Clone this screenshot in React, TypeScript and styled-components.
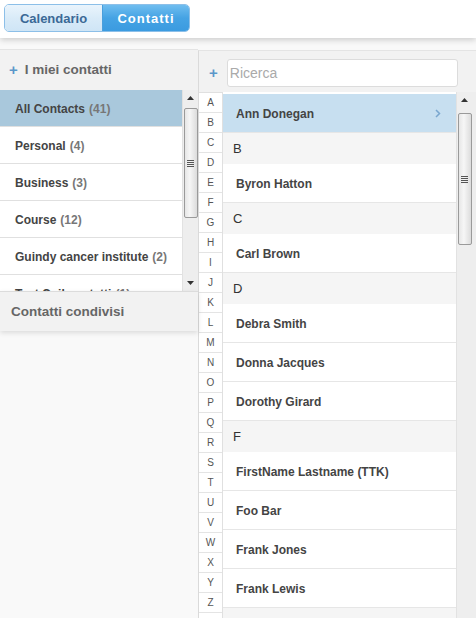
import React from 'react'
import styled, { createGlobalStyle } from 'styled-components'

const GlobalStyle = createGlobalStyle`
  html, body {
    margin: 0;
    padding: 0;
    background: #f9f9f9;
    font-family: 'Liberation Sans', Arial, sans-serif;
    overflow: hidden;
  }
  * { box-sizing: border-box; }
`

const groups = [
  { name: 'All Contacts', count: 41, active: true },
  { name: 'Personal', count: 4 },
  { name: 'Business', count: 3 },
  { name: 'Course', count: 12 },
  { name: 'Guindy cancer institute', count: 2 },
  { name: 'Test Coil contatti', count: 1 },
]

type Entry = { kind: 'header' | 'contact'; label: string; active?: boolean }

const contacts: Entry[] = [
  { kind: 'contact', label: 'Ann Donegan', active: true },
  { kind: 'header', label: 'B' },
  { kind: 'contact', label: 'Byron Hatton' },
  { kind: 'header', label: 'C' },
  { kind: 'contact', label: 'Carl Brown' },
  { kind: 'header', label: 'D' },
  { kind: 'contact', label: 'Debra Smith' },
  { kind: 'contact', label: 'Donna Jacques' },
  { kind: 'contact', label: 'Dorothy Girard' },
  { kind: 'header', label: 'F' },
  { kind: 'contact', label: 'FirstName Lastname (TTK)' },
  { kind: 'contact', label: 'Foo Bar' },
  { kind: 'contact', label: 'Frank Jones' },
  { kind: 'contact', label: 'Frank Lewis' },
  { kind: 'header', label: 'G' },
]

const letters = 'ABCDEFGHIJKLMNOPQRSTUVWXYZ#'.split('')

const ScrollBar = ({ wide, thumbTop, thumbHeight }: { wide?: boolean; thumbTop: number; thumbHeight: number }) => (
  <Track $wide={wide}>
    <Arrow>
      <svg width="7" height="4" viewBox="0 0 7 4"><path d="M0 4 L3.5 0 L7 4 Z" fill="#333" /></svg>
    </Arrow>
    <Thumb style={{ marginTop: thumbTop, height: thumbHeight }}>
      <Grip />
    </Thumb>
    <Spacer />
    {!wide && (
      <Arrow>
        <svg width="7" height="4" viewBox="0 0 7 4"><path d="M0 0 L3.5 4 L7 0 Z" fill="#333" /></svg>
      </Arrow>
    )}
  </Track>
)

export default function App() {
  return (
    <>
      <GlobalStyle />
      <TopBar>
        <Segmented>
          <SegButton>Calendario</SegButton>
          <SegButton $active>Contatti</SegButton>
        </Segmented>
      </TopBar>
      <Main>
        <LeftPanel>
          <PanelHeader>
            <Plus>+</Plus>I miei contatti
          </PanelHeader>
          <GroupArea>
            <GroupList>
              {groups.map(g => (
                <GroupItem key={g.name} $active={g.active}>
                  {g.name} <Count>({g.count})</Count>
                </GroupItem>
              ))}
            </GroupList>
            <ScrollBar thumbTop={2} thumbHeight={110} />
          </GroupArea>
          <SharedHeader>Contatti condivisi</SharedHeader>
        </LeftPanel>
        <RightPanel>
          <SearchBar>
            <Plus>+</Plus>
            <SearchInput placeholder="Ricerca" />
          </SearchBar>
          <ContactsArea>
            <Alphabet>
              {letters.map(l => (
                <Letter key={l}>{l === '#' ? '' : l}</Letter>
              ))}
            </Alphabet>
            <ContactList>
              {contacts.map((c, i) =>
                c.kind === 'header' ? (
                  <SectionHeader key={i}>{c.label}</SectionHeader>
                ) : (
                  <ContactRow key={i} $active={c.active}>
                    {c.label}
                    {c.active && (
                      <svg width="6" height="9" viewBox="0 0 6 9">
                        <path d="M1 1 L4.5 4.5 L1 8" stroke="#7aa7cf" strokeWidth="1.5" fill="none" />
                      </svg>
                    )}
                  </ContactRow>
                )
              )}
            </ContactList>
            <ScrollBar wide thumbTop={5} thumbHeight={132} />
          </ContactsArea>
        </RightPanel>
      </Main>
    </>
  )
}

const TopBar = styled.div`
  height: 38px;
  background: #fff;
  padding: 4px;
  box-shadow: 0 2px 6px rgba(0, 0, 0, 0.18);
  position: relative;
  z-index: 2;
`
const Segmented = styled.div`
  display: inline-flex;
  height: 28px;
  border-radius: 5px;
  overflow: hidden;
  border: 1px solid #8cbfe8;
`
const SegButton = styled.div<{ $active?: boolean }>`
  display: flex;
  align-items: center;
  justify-content: center;
  font-size: 13px;
  font-weight: bold;
  width: ${p => (p.$active ? '87px' : '97px')};
  color: ${p => (p.$active ? '#fff' : '#3b6996')};
  letter-spacing: ${p => (p.$active ? '1px' : '0')};
  background: ${p =>
    p.$active
      ? 'linear-gradient(#6fbdef, #45a3e4 50%, #3b9be0)'
      : 'linear-gradient(#eaf4fc, #d9ebf8 50%, #cfe5f6)'};
  border-left: ${p => (p.$active ? '1px solid #4a9fdc' : 'none')};
`
const Main = styled.div`
  display: flex;
  margin-top: 11px;
  height: 569px;
`
const LeftPanel = styled.div`
  width: 198px;
  display: flex;
  flex-direction: column;
`
const PanelHeader = styled.div`
  height: 41px;
  background: #f2f2f2;
  border-top: 1px solid #e4e4e4;
  display: flex;
  align-items: center;
  padding-left: 9px;
  padding-bottom: 2px;
  font-size: 13.5px;
  font-weight: bold;
  color: #666;
`
const Plus = styled.span`
  color: #5b97c9;
  font-size: 15px;
  font-weight: bold;
  margin-right: 7px;
`
const GroupArea = styled.div`
  height: 201px;
  display: flex;
  background: #fff;
`
const GroupList = styled.div`
  flex: 1;
  overflow: hidden;
`
const GroupItem = styled.div<{ $active?: boolean }>`
  height: 37px;
  flex-shrink: 0;
  display: flex;
  align-items: center;
  gap: 4px;
  padding: 1px 0 0 15px;
  white-space: nowrap;
  font-size: 12px;
  font-weight: bold;
  color: #444;
  background: ${p => (p.$active ? '#a9c8dc' : '#fff')};
  border-bottom: 1px solid #e0e0e0;
`
const Count = styled.span`
  font-size: 12px;
  color: #777;
`
const Track = styled.div<{ $wide?: boolean }>`
  width: ${p => (p.$wide ? '20px' : '16px')};
  padding-right: ${p => (p.$wide ? '4px' : '0')};
  background: #eeeeee;
  border-left: 1px solid #e2e2e2;
  display: flex;
  flex-direction: column;
  align-items: center;
`
const Arrow = styled.div`
  height: 16px;
  display: flex;
  align-items: center;
  justify-content: center;
`
const Thumb = styled.div`
  width: 14px;
  flex-shrink: 0;
  border: 1px solid #9a9a9a;
  border-radius: 2px;
  background: linear-gradient(90deg, #e6e6e6, #f6f6f6 40%, #dcdcdc);
  display: flex;
  align-items: center;
  justify-content: center;
`
const Grip = styled.div`
  width: 7px;
  height: 7px;
  background: repeating-linear-gradient(#555 0 1px, transparent 1px 2px);
`
const Spacer = styled.div`
  flex: 1;
`
const SharedHeader = styled.div`
  height: 40px;
  background: #f2f2f2;
  border-top: 1px solid #dcdcdc;
  box-shadow: 0 2px 5px rgba(0, 0, 0, 0.12);
  display: flex;
  align-items: center;
  padding-left: 11px;
  font-size: 13.5px;
  font-weight: bold;
  color: #666;
  position: relative;
`
const RightPanel = styled.div`
  flex: 1;
  margin-top: 1px;
  border-left: 1px solid #dadada;
  border-top: 1px solid #e4e4e4;
  display: flex;
  flex-direction: column;
  min-width: 0;
`
const SearchBar = styled.div`
  height: 41px;
  background: #f2f2f2;
  display: flex;
  align-items: center;
  padding-left: 10px;
  padding-right: 18px;
  padding-top: 2px;
  & > span {
    margin-right: 9px;
  }
`
const SearchInput = styled.input`
  flex: 1;
  height: 28px;
  border: 1px solid #dcdcdc;
  border-radius: 3px;
  padding: 0 2px;
  font-family: 'Liberation Sans', Arial, sans-serif;
  font-size: 14px;
  color: #333;
  background: #fff;
  outline: none;
  &::placeholder {
    color: #aaa;
  }
`
const ContactsArea = styled.div`
  flex: 1;
  display: flex;
  overflow: hidden;
`
const Alphabet = styled.div`
  width: 24px;
  background: #fff;
  border-top: 1px solid #e0e0e0;
  border-right: 1px solid #e0e0e0;
  display: flex;
  flex-direction: column;
`
const Letter = styled.div`
  height: 20px;
  flex-shrink: 0;
  border-bottom: 1px solid #e4e4e4;
  display: flex;
  align-items: center;
  justify-content: center;
  font-size: 10px;
  color: #555;
`
const ContactList = styled.div`
  flex: 1;
  overflow: hidden;
  padding-top: 2px;
  background: #fff;
`
const SectionHeader = styled.div`
  height: 31px;
  background: #f5f5f5;
  display: flex;
  align-items: center;
  padding-left: 10px;
  font-size: 13px;
  color: #333;
`
const ContactRow = styled.div<{ $active?: boolean }>`
  height: 39px;
  display: flex;
  align-items: center;
  justify-content: space-between;
  padding: 1px 15px 0 13px;
  font-size: 12px;
  font-weight: bold;
  color: #444;
  background: ${p => (p.$active ? '#c7dff0' : '#fff')};
  border-bottom: 1px solid #e6e6e6;
`
